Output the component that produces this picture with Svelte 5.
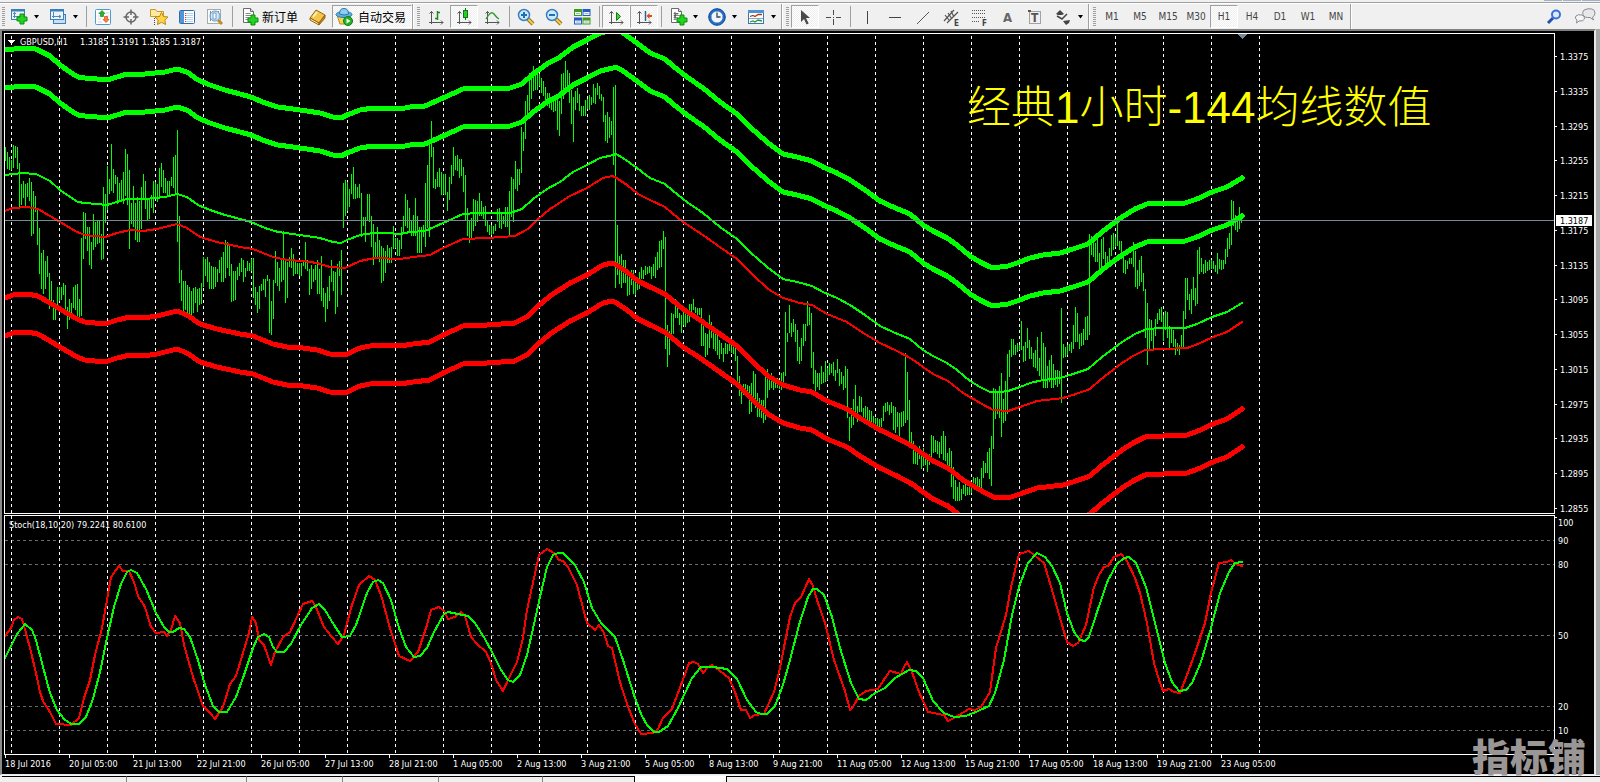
<script>
  const priceLevels = Array.from({ length: 14 }, (_, i) => ({
    label: (1.3375 - i * 0.004).toFixed(4),
    y: Math.round(56 + (i * 452) / 13),
  }));
  const stochLevels = [[90, 540], [80, 564], [50, 635], [20, 706], [10, 730]];
  const gridX = Array.from({ length: 27 }, (_, i) => 11 + i * 48);
  const times = [
    '18 Jul 2016', '20 Jul 05:00', '21 Jul 13:00', '22 Jul 21:00', '26 Jul 05:00', '27 Jul 13:00', '28 Jul 21:00',
    '1 Aug 05:00', '2 Aug 13:00', '3 Aug 21:00', '5 Aug 05:00', '8 Aug 13:00', '9 Aug 21:00', '11 Aug 05:00',
    '12 Aug 13:00', '15 Aug 21:00', '17 Aug 05:00', '18 Aug 13:00', '19 Aug 21:00', '23 Aug 05:00',
  ];

  // High-low ranges, one bar every two units, keyed by the first bar's x.
  const runs = [
    [5, '147-160 152-168 157-169 160-169 145-167 146-157 147-168 163-207 184-204 181-197 184-206 183-196 178-200 182-235 191-233 196-211 209-244 228-273 253-288 250-293 261-288 256-276 273-308 281-302 300-319 303-319 287-305 287-300 287-299 283-294 285-312 307-328 299-319 303-313 287-307 285-309 284-317 299-316'],
    [81, '238-315 212-258 213-238 227-250 227-264 242-268 214-249 222-246 220-243 220-242 234-259 187-258 194-222 166-209 179-193 144-190 169-192 175-183 177-203 183-199 180-199 172-203 149-195 154-204 170-248 203-223 186-226 203-239 197-241 201-241 187-228 174-199 181-208 200-220 200-218 195-207 181-212 182-196 184-201 168-196'],
    [161, '163-186 170-192 178-192 181-195 181-194 177-185 157-187 155-192 130-241 216-282 270-300 281-310 281-309 285-313 287-315 291-315 288-312 287-302 289-311 288-304 283-303 257-286 259-275 257-281 262-288 266-288 267-288 267-286 269-281 260-272 257-281 252-281 240-277 242-267 246-275 264-301 271-300 271-299 267-279 263-275'],
    [241, '258-271 260-281 268-276 261-270 263-270 259-270 258-297 287-304 292-312 286-308 284-290 279-289 279-296 275-280 279-332 301-334 280-318 251-282 262-285 268-290 260-281 231-279 259-302 262-297 257-266 248-267 254-275 262-273 263-273 263-275 263-275 260-265 242-268 260-270 269-294 265-288 269-281 265-279 260-293 269-293'],
    [321, '256-300 288-306 293-321 287-308 276-300 260-281 271-290 272-313 264-306 261-275 250-294 183-227 180-215 182-210 189-206 174-193 167-198 184-198 187-197 184-197 193-236 217-225 217-241 194-219 194-221 216-246 224-264 242-257 227-256 240-261 246-282 248-280 251-272 245-262 248-262 247-262 226-248 238-247 238-255 240-255'],
    [401, '227-248 216-231 194-225 200-227 208-230 220-235 215-235 198-235 216-252 227-252 227-252 225-236 183-246 165-227 144-236 121-156 147-187 179-188 172-186 168-186 172-194 174-193 174-194 192-210 177-199 165-183 147-175 156-169 155-170 159-177 159-175 167-191 175-220 208-235 221-242 218-238 199-230 200-225 201-221 193-215'],
    [481, '201-215 207-218 206-225 220-231 225-234 225-234 226-233 224-230 209-221 208-227 214-228 216-223 207-226 207-226 191-235 177-216 179-221 161-188 169-190 169-184 127-172 132-150 101-138 95-115 73-110 77-98 66-90 71-89 73-89 74-85 78-92 81-95 87-105 93-105 93-107 97-109 97-111 95-110 98-129 101-135'],
    [561, '74-113 73-98 61-90 70-88 73-102 90-123 97-141 91-109 88-102 94-110 106-115 106-115 100-115 99-108 95-109 97-104 84-102 88-103 83-94 86-98 94-100 97-121 115-140 112-142 117-137 121-134 87-164 85-287 225-274 256-283 254-287 260-282 260-282 272-295 275-294 270-284 270-293 280-294 279-289 272-288'],
    [641, '267-278 270-278 266-274 267-273 266-272 267-278 264-275 257-277 252-269 241-267 240-266 231-248 237-348 325-366 331-354 313-337 314-333 299-317 308-317 313-324 315-332 311-324 313-326 313-322 304-321 304-313 299-309 307-312 308-314 308-314 308-345 324-345 333-356 334-354 315-347 322-337 331-348 332-350 335-354 340-358'],
    [721, '343-353 348-361 343-353 344-353 340-350 344-352 347-353 347-360 356-386 376-395 388-403 384-394 384-395 385-395 386-413 383-411 371-397 374-407 393-416 398-416 400-417 400-422 377-419 369-397 380-389 373-387 377-389 378-387 378-387 380-388 373-389 372-381 312-375 333-341 305-332 323-336 319-331 324-341 330-360 347-363'],
    [801, '338-360 324-345 324-340 301-325 307-324 313-367 352-383 370-392 373-386 373-389 366-383 372-382 361-381 368-379 363-374 364-372 362-375 370-380 359-372 369-385 372-383 376-389 366-387 369-417 417-440 408-427 399-424 385-413 406-421 396-411 397-411 408-418 406-420 407-420 410-422 411-422 416-426 418-428 418-429 419-428'],
    [881, '418-426 406-420 403-411 402-410 405-414 402-412 406-429 407-432 412-426 413-437 412-426 411-425 353-422 372-419 400-443 432-445 441-463 452-463 451-464 446-458 452-468 448-465 457-464 458-471 454-464 435-457 436-452 440-451 441-453 442-457 436-453 431-459 436-460 453-466 448-466 451-486 467-498 480-500 487-500 482-500'],
    [961, '489-499 485-493 483-495 487-494 487-494 484-492 477-486 478-487 477-486 479-488 468-489 461-477 463-472 452-472 448-478 436-485 388-448 389-418 392-413 386-417 373-436 399-422 381-420 354-413 350-376 339-356 339-354 345-354 343-351 345-349 321-349 346-361 342-360 328-347 340-358 347-358 353-366 350-367 337-370 358-375'],
    [1041, '332-380 343-387 347-387 366-387 360-381 355-387 364-387 370-384 370-386 371-383 308-402 344-357 347-356 345-354 344-350 342-352 325-348 307-341 313-341 334-348 333-345 329-344 317-339 316-339 234-334 236-254 237-256 243-261 239-261 253-269 239-270 237-258 252-268 256-264 248-263 235-255 233-249 237-246 222-245 241-249'],
    [1121, '241-258 254-272 260-273 261-268 258-263 258-263 242-266 251-286 270-288 260-285 256-281 273-290 289-337 303-364 319-349 320-340 329-348 319-335 313-323 309-319 307-321 315-340 311-329 312-337 326-347 328-342 330-346 339-354 343-350 345-354 335-346 311-347 278-318 278-299 294-309 289-313 277-299 288-305 250-303 247-273'],
    [1201, '258-271 264-273 260-272 262-270 260-269 260-268 261-268 265-271 253-273 259-268 260-269 260-268 249-263 238-256 233-248 200-244 201-225 215-229 217-231 207-228 216-222'],
  ];
  const bars = runs
    .map(([x0, list]) =>
      list.split(' ').map((r, i) => {
        const [hi, lo] = r.split('-').map(Number);
        return `M${x0 + i * 2 + 0.5} ${hi}V${lo + 1}`;
      }).join(''))
    .join('');

  const maHigh = '5,175 14,174 22,173 36,174 50,181 60,190 70,197 78,202 85,203 97,204 107,205 117,202 127,199 145,199 165,197 177,194 187,197 198,205 210,210 225,215 240,219 251,222 265,228 278,232 300,235 320,238 333,242 341,243 347,240 360,235 373,233 385,233 400,234 410,232 425,231 443,223 463,214 478,213 510,213 522,209 533,199 547,189 560,182 573,172 587,165 600,158 613,155 616,154 623,158 637,168 650,178 665,184 673,191 687,202 703,213 720,227 737,239 750,252 767,267 783,279 797,282 812,286 823,292 837,298 850,305 865,315 880,326 893,332 910,339 923,350 933,356 947,363 957,370 970,381 980,387 990,392 1000,392 1008,391 1020,387 1030,383 1043,380 1060,378 1073,374 1088,369 1102,357 1122,342 1135,334 1147,329 1162,328 1185,328 1197,324 1212,317 1227,312 1242,303';
  const maLow = '5,211 13,208 27,207 38,209 50,216 60,222 77,232 85,235 105,237 117,233 130,230 143,231 157,229 177,224 187,228 200,237 217,242 240,247 253,249 273,257 287,260 303,261 317,263 330,267 345,268 360,261 375,258 400,259 413,257 430,255 443,248 463,239 487,238 515,236 528,229 537,220 550,209 570,196 587,188 603,178 612,176 615,177 627,185 638,194 650,200 665,207 672,213 683,222 700,233 717,245 737,259 753,275 768,289 783,298 800,303 812,305 827,314 847,322 860,331 880,343 897,351 912,359 923,367 933,374 948,381 963,393 982,404 993,410 1008,411 1020,407 1037,401 1063,398 1073,395 1090,389 1100,380 1122,363 1133,356 1145,350 1163,349 1187,348 1198,344 1213,337 1227,332 1242,322';
  const bands = [
    { points: maHigh, dy: 0, w: 2, c: '#00ff00' },
    { points: maLow, dy: 0, w: 2, c: '#ff0000' },
    { points: maHigh, dy: -87, w: 5, c: '#00ff00' },
    { points: maHigh, dy: -125, w: 5, c: '#00ff00' },
    { points: maLow, dy: 87, w: 5, c: '#ff0000' },
    { points: maLow, dy: 125, w: 5, c: '#ff0000' },
  ];

  const stochMain = '5,636 11,628 14,620 18,617 22,619 26,633 30,648 36,673 40,692 43,701 50,712 56,724 71,725 79,718 84,698 90,680 95,655 102,628 107,600 111,577 119,566 123,571 129,571 134,582 138,596 145,607 151,627 156,633 164,632 167,636 171,630 175,616 180,623 184,645 193,677 203,706 211,714 215,719 223,707 230,684 236,676 243,653 249,633 252,617 256,623 259,640 264,645 271,665 275,652 283,637 290,632 303,604 312,601 315,605 324,627 332,637 338,644 344,635 351,608 359,585 369,576 375,580 382,598 389,625 399,656 410,661 418,652 427,625 431,610 439,607 444,611 448,619 455,617 461,612 465,616 471,637 477,644 486,652 491,663 496,680 503,691 509,678 517,662 523,638 527,610 534,578 539,555 547,549 554,553 559,560 563,561 568,567 577,585 584,612 587,623 595,630 599,625 604,633 608,646 612,648 620,682 628,707 635,724 641,734 653,733 658,729 663,718 672,709 684,677 689,663 694,662 698,664 703,673 708,667 712,665 720,671 729,678 735,692 741,710 746,710 750,718 755,715 764,714 774,692 780,668 785,642 790,617 795,603 801,597 809,579 813,586 817,600 825,623 834,660 845,691 850,710 853,707 859,696 866,691 878,689 885,678 890,671 901,674 904,667 907,662 912,672 919,692 928,712 944,715 948,721 956,717 964,712 969,709 975,710 981,707 990,692 996,648 1006,615 1011,587 1019,554 1029,551 1034,555 1044,563 1052,590 1060,618 1067,642 1073,646 1078,643 1086,625 1094,587 1099,575 1104,567 1108,566 1114,557 1121,554 1127,561 1135,578 1140,593 1147,623 1154,663 1159,680 1163,691 1169,689 1174,692 1180,693 1187,675 1195,653 1205,623 1211,593 1219,563 1227,562 1231,560 1236,564 1242,566';
  const stochSignal = '5,658 17,634 25,624 32,630 36,640 43,667 50,693 57,710 64,719 71,724 79,724 86,717 93,699 100,672 107,638 114,607 121,584 127,572 131,570 137,573 146,589 156,613 164,627 169,632 173,632 179,628 184,629 190,637 198,660 205,685 213,706 219,712 227,712 236,697 244,675 253,648 258,637 264,634 269,637 273,647 277,652 284,652 291,644 301,625 312,608 319,604 325,610 334,625 342,637 350,636 356,625 367,593 373,582 378,580 383,583 391,600 399,628 406,647 414,657 420,656 427,648 434,632 444,614 448,612 458,614 468,616 475,623 485,639 492,652 501,670 508,680 513,682 520,675 527,655 532,633 540,597 547,567 553,555 558,553 563,553 575,565 584,582 592,608 601,623 615,637 623,660 634,695 641,714 647,725 654,732 659,732 668,726 678,708 692,678 701,667 713,667 727,669 737,679 747,700 756,712 761,714 767,714 775,706 783,685 790,660 799,625 808,597 813,589 817,589 824,595 832,617 840,648 851,683 859,699 866,700 875,693 885,688 895,678 909,670 916,671 923,678 933,701 944,713 954,717 966,716 978,711 989,706 995,693 1004,660 1012,615 1019,587 1028,563 1037,553 1045,557 1052,566 1060,583 1067,613 1074,632 1080,640 1085,641 1089,637 1097,612 1108,580 1117,564 1124,558 1129,557 1136,563 1146,587 1156,627 1165,663 1172,682 1179,691 1186,690 1192,683 1201,662 1211,628 1220,593 1229,572 1235,563 1242,562';

  const plus = (x, y) => `<path transform="translate(${x} ${y})" d="M-2-5h4v3h3v4h-3v3h-4v-3h-3v-4h3z" fill="#22d41e" stroke="#0b8a10"/>`;
  const axes = '<path d="M5.500 4.500V17M3 15.500H17M3.500 6.500l2-2 2 2M15 13.500l2 2-2 2" stroke="#555" fill="none"/>';
  const sheet = '<path d="M3.500 1.500h7l3 3v11h-10z" fill="#fff" stroke="#6b6b6b"/><path d="M10.500 1.500v3h3" fill="#ddd" stroke="#6b6b6b"/><path d="M5.500 6.500h5M5.500 8.500h6M5.500 10.500h4M5.500 12.500h3" stroke="#888"/>';
  const lens = (sign) => `<path d="M12 12l5 5" stroke="#9a7415" stroke-width="4"/><path d="M12 12l5 5" stroke="#f3cf53" stroke-width="2"/><circle cx="8" cy="8" r="5.500" fill="#cdeafb" stroke="#3a7fc0" stroke-width="1.500"/><path d="${sign}" stroke="#1d6fb8" stroke-width="2"/>`;
  const icons = {
    newchart: `<rect x="2.500" y="2.500" width="13" height="10" fill="#eaf4fc" stroke="#3f7fb8"/><path d="M2 3.500h14" stroke="#3f7fb8" stroke-width="2"/><path d="M5.500 5v6M4 9.500h9M4 6.500h3" stroke="#5a86ad"/>${plus(13, 12)}`,
    profiles: '<rect x="5.500" y="7.500" width="12" height="9" fill="#c9def2" stroke="#3f7fb8"/><rect x="2.500" y="2.500" width="13" height="10" fill="#eaf4fc" stroke="#3f7fb8"/><path d="M2 3.500h14" stroke="#3f7fb8" stroke-width="2"/><path d="M5.500 5v6M4 9.500h9M11 8l2 1.500-2 1.500" stroke="#5a86ad" fill="none"/>',
    market: '<rect x="2.500" y="2.500" width="15" height="15" rx="1" fill="#fff" stroke="#4a9bd0"/><path d="M5 6h3M5 9h2M5 12h3M5 15h4M13 6h3M13 9h3" stroke="#c9d6df"/><path d="M9 3.500l3 3h-1.500v3h-3v-3H6z" fill="#27b527" stroke="#0b7a18" stroke-width=".6"/><path d="M13 15.500l-3-3h1.500v-3h3v3H16z" fill="#ff7d3b" stroke="#c43d08" stroke-width=".6"/>',
    target: '<circle cx="10" cy="10" r="5" fill="none" stroke="#666" stroke-width="1.500"/><path d="M10 2.500v5.500M10 12v5.500M2.500 10H8M12 10h5.500" stroke="#666" stroke-width="1.500"/>',
    favorites: '<path d="M1.500 9.500v-7h5l1.500 2h6.500v5z" fill="#ffe9a0" stroke="#c39a2e"/><path d="M5.500 11v7" stroke="#444" stroke-dasharray="1 1"/><path d="M12.500 5.500l2 4 4.500.5-3.200 3 .8 4.500-4.100-2.200-4 2.200.7-4.500L6 10l4.500-.5z" fill="#ffd447" stroke="#b98912"/>',
    navigator: '<rect x="2.500" y="3.500" width="15" height="13" rx="1" fill="#fff" stroke="#2c6da8"/><path d="M3 4h4v12H3z" fill="#4f97d7"/><path d="M9 6.500h7M9 8.500h7M9 10.500h7M9 12.500h7M9 14.500h7" stroke="#b7d3ea"/><path d="M8 6.500h1M8 8.500h1M8 10.500h1M8 12.500h1M8 14.500h1" stroke="#d04040"/>',
    tester: '<rect x="2.500" y="2.500" width="13" height="14" fill="#fafafa" stroke="#aaa"/><path d="M5.500 4v10M13.500 4v10" stroke="#888"/><path d="M13 13l4 4" stroke="#c08d22" stroke-width="3"/><circle cx="10" cy="9" r="5" fill="#cfe7fa" fill-opacity=".85" stroke="#5b9bcf"/><rect x="8" y="6" width="3" height="6" fill="#fff" stroke="#6a9cc4"/>',
    order: `${sheet}${plus(13, 13)}`,
    gold: '<path d="M2 11l6-8 9 5-6 8z" fill="#f3c64b" stroke="#96650b"/><path d="M2 11l9 5v2l-9-5z" fill="#fff0b5" stroke="#96650b"/><path d="M11 16l6-8v3l-6 7z" fill="#c98c16" stroke="#96650b"/><path d="M5 10l4-5" stroke="#fff2b8" stroke-width="2"/>',
    auto: '<path d="M3 8l3 9h6l5-9z" fill="#f6d45c" stroke="#b28f1d"/><ellipse cx="10" cy="7.500" rx="8" ry="3" fill="#5fb2e0" stroke="#2878ab"/><path d="M5.500 7q0-5.500 4.500-5.500t4.500 5.500q-4 2-9 0z" fill="#8dcdf0" stroke="#2878ab"/><circle cx="14" cy="14" r="4.500" fill="#22b322" stroke="#0c7d15"/><path d="M12.500 11.500v5l4-2.500z" fill="#fff"/>',
    bars: `${axes}<path d="M11.500 4v9M9 11.500h2.500M11.500 5.500H14" stroke="#1e8a1e" stroke-width="1.500"/>`,
    candles: `${axes}<path d="M11.500 1v12" stroke="#0a7a14"/><rect x="9.500" y="3.500" width="4" height="7" fill="#1fd31f" stroke="#0a7a14"/>`,
    line: `${axes}<path d="M4 12Q9 3 12 7t5 5" stroke="#2b9b2b" fill="none" stroke-width="1.300"/>`,
    zoomin: lens('M5 8h6M8 5v6'),
    zoomout: lens('M5 8h6'),
    tile: '<path d="M2 2h8v7H2zM10.500 10.500h8v7h-8z" fill="#3f9a1f"/><path d="M10.500 2h8v7h-8zM2 10.500h8v7H2z" fill="#2559c8"/><path d="M3 5h6v3H3zM11.500 5h6v3h-6zM3 13.500h6v3H3zM11.500 13.500h6v3h-6z" fill="#edf6e8"/><path d="M4 6.500h4M12.500 6.500h4M4 15h4M12.500 15h4" stroke="#9bb7d2"/>',
    scroll: `${axes}<path d="M10.500 5.500v8l4-4z" fill="#3fd13f" stroke="#0d7f17"/>`,
    shift: `${axes}<path d="M11.500 4v10" stroke="#1f66a0" stroke-width="1.500"/><path d="M12.500 9l3-3v2h2.500v2h-2.500v2z" fill="#e04a12"/>`,
    indicators: `${sheet}<path d="M7 5v7M10 7q-3-1-3 3" stroke="#555" fill="none"/>${plus(14, 13)}`,
    clock: '<circle cx="10" cy="10" r="7" fill="#eef7ff" stroke="#1d6fd0" stroke-width="2.500"/><circle cx="10" cy="10" r="8.300" fill="none" stroke="#0f3f8c"/><path d="M10 5.500V10h3.500" stroke="#444" stroke-width="1.300" fill="none"/><path d="M10 3.500v1M10 15.500v1M3.500 10h1M15.500 10h1" stroke="#555"/>',
    template: '<rect x="2.500" y="3.500" width="15" height="13" fill="#fff" stroke="#3878b5"/><path d="M2 4.500h16" stroke="#4d93d3" stroke-width="3"/><path d="M4 9.500l3-1 2 1 3-2h4" stroke="#a33b1c" stroke-width="1.300" fill="none"/><path d="M3 11.500h14" stroke="#7ea7cc"/><path d="M4 15l3-1 2 1 3-2 4 1" stroke="#2d9434" stroke-width="1.300" fill="none"/>',
    cursor: '<path d="M6 3v12l3-3 2.500 5.500 2.200-1L11 11h4z" fill="#4a4a4a"/>',
    cross: '<path d="M10.500 3v5M10.500 12v6M3 10.500h5M13 10.500h5M10 10.500h1" stroke="#4a4a4a"/>',
    vline: '<path d="M10.500 4v13" stroke="#444"/>',
    hline: '<path d="M4 10.500h12" stroke="#444"/>',
    trend: '<path d="M4 17L16 5" stroke="#555"/>',
    channel: '<path d="M3 14L13 3M6 16L17 5M4 8l4 5M7 6l4 6M10 4l3 6" stroke="#555" stroke-width="1.200"/><text x="13" y="19" font-size="8" font-weight="700" fill="#444">E</text>',
    fibo: '<path d="M3 3.500h14M3 6.500h14M3 10.500h14M3 14.500h8" stroke="#555" stroke-dasharray="1 1"/><text x="13" y="19" font-size="8" font-weight="700" fill="#444">F</text>',
    text: '<text x="6" y="15" font-size="13" font-weight="700" fill="#666">A</text>',
    label: '<rect x="4.500" y="4.500" width="11" height="12" fill="none" stroke="#555" stroke-dasharray="1 1"/><path d="M3 3h3v2H3z" fill="#555"/><text x="6" y="15" font-size="12" font-weight="700" fill="#555">T</text>',
    arrows: '<path d="M3 7l4-4 4 4-2 1H5zM10 14l7-1-1 3-3 2z" fill="#444"/><path d="M4 9l5 3 3-3M9 12l5-5" stroke="#444" stroke-width="1.500" fill="none"/>',
    search: '<path d="M8 11l-5 5" stroke="#2450b4" stroke-width="3"/><circle cx="11" cy="7.500" r="4" fill="#dcebff" stroke="#3a6fd8" stroke-width="2"/>',
    chat: '<path d="M9 3q4-2 8-1 3 1 3 4t-2.500 4l1 3-3.500-2.500q-6 .5-7-3Q7 5 9 3z" fill="#e8e8ec" stroke="#8b8b93"/><path d="M1 9q2-2 6-1 3 1 2.500 4-1 2.500-5.500 2l-2.500 2 .5-3Q-1 11 1 9z" fill="#f5f5f7" stroke="#8b8b93"/>',
  };

  const left = [
    { icon: 'newchart', name: 'New chart', menu: true }, { icon: 'profiles', name: 'Profiles', menu: true }, { sep: true },
    { icon: 'market', name: 'Market watch' }, { icon: 'target', name: 'Data window' }, { icon: 'favorites', name: 'Navigator' },
    { icon: 'navigator', name: 'Terminal' }, { icon: 'tester', name: 'Strategy tester' }, { sep: true },
    { icon: 'order', text: '新订单', cls: 'order' }, { icon: 'gold', name: 'MetaEditor' }, { icon: 'auto', text: '自动交易', cls: 'auto', on: true },
  ];
  const charts = [
    { icon: 'bars', name: 'Bar chart' }, { icon: 'candles', name: 'Candlesticks', on: true }, { icon: 'line', name: 'Line chart' }, { sep: true },
    { icon: 'zoomin', name: 'Zoom in' }, { icon: 'zoomout', name: 'Zoom out' }, { icon: 'tile', name: 'Tile windows' }, { sep: true },
    { icon: 'scroll', name: 'Auto scroll', on: true }, { icon: 'shift', name: 'Chart shift', on: true }, { sep: true },
    { icon: 'indicators', name: 'Indicators', menu: true }, { icon: 'clock', name: 'Periods', menu: true }, { icon: 'template', name: 'Templates', menu: true },
  ];
  const drawing = [
    { icon: 'cursor', name: 'Cursor', on: true }, { icon: 'cross', name: 'Crosshair' }, { sep: true },
    { icon: 'vline', name: 'Vertical line' }, { icon: 'hline', name: 'Horizontal line' }, { icon: 'trend', name: 'Trendline' },
    { icon: 'channel', name: 'Equidistant channel' }, { icon: 'fibo', name: 'Fibonacci' }, { icon: 'text', name: 'Text' },
    { icon: 'label', name: 'Text label' }, { icon: 'arrows', name: 'Arrows', menu: true },
  ];
  let period = $state('H1');
  const periods = ['M1', 'M5', 'M15', 'M30', 'H1', 'H4', 'D1', 'W1', 'MN'].map((p) => ({ text: p, period: p }));
  const groups = [left, charts, drawing, periods];
  const tabs = [125, 120, 96, 96, 104, 92];
</script>

{#snippet glyph(name)}
  <svg class="icon" viewBox="0 0 20 20" aria-hidden="true">{@html icons[name]}</svg>
{/snippet}

<div class="app">
  <div class="titlebar"><i></i><i></i><i></i></div>

  <div class="toolbar">
    {#each groups as group}
      <div class="group" role="toolbar">
        <span class="grip"></span>
        {#each group as item}
          {#if item.sep}
            <span class="sep"></span>
          {:else if item.period}
            <button class="tb period" class:on={period === item.period} onclick={() => (period = item.period)}>{item.text}</button>
          {:else}
            <button class="tb {item.cls ?? ''}" class:on={item.on} aria-label={item.text ?? item.name}>
              {@render glyph(item.icon)}{#if item.text}<span>{item.text}</span>{/if}
            </button>
            {#if item.menu}
              <button class="drop" aria-label="{item.name} menu"><svg width="7" height="4" viewBox="0 0 7 4"><path d="M1 0h5L3.500 3.500z" /></svg></button>
            {/if}
          {/if}
        {/each}
      </div>
    {/each}
    <div class="tools">
      <button class="tb" aria-label="Search">{@render glyph('search')}</button>
      <button class="tb" aria-label="Chat">{@render glyph('chat')}</button>
    </div>
  </div>

  <main class="window">
    <section class="panes">
      <div class="plot main">
        <svg class="canvas">
          <g transform="translate(-5 -34)">
            {#each gridX as x}<path class="grid" d="M{x + 0.5} 36V514" />{/each}
            <path class="bars" d={bars} />
            {#each bands as b}
              <polyline points={b.points} transform="translate(0 {b.dy})" stroke={b.c} stroke-width={b.w} />
            {/each}
            <line class="price" x1="5" x2="100%" y1="220.500" y2="220.500" />
            <line class="price" x1="1200" x2="1700" y1="220.500" y2="220.500" />
            <path d="M1237 34h11l-5.500 5z" fill="#778899" />
            <path d="M8 40h7l-3.500 4z" fill="#fff" />
            <text x="20" y="45">GBPUSD,H1</text>
            <text x="80" y="45">1.3185 1.3191 1.3185 1.3187</text>
            <text class="note" x="967" y="123">经典1小时-144均线数值</text>
          </g>
        </svg>
      </div>
      <svg class="axis">
        <g transform="translate(-1555 -33)">
          {#each priceLevels as p}
            <path class="tick" d="M1555 {p.y + 0.5}h2" />
            <text x="1560" y={p.y + 4}>{p.label}</text>
          {/each}
          <rect x="1556" y="215" width="36" height="11" fill="#fff" />
          <text class="now" x="1560" y="224">1.3187</text>
        </g>
      </svg>

      <div class="plot sub">
        <svg class="canvas">
          <g transform="translate(-5 -516)">
            {#each stochLevels as [, y]}<path class="level" d="M5 {y + 0.5}H4000" />{/each}
            {#each gridX as x}<path class="grid" d="M{x + 0.5} 516V754" />{/each}
            <polyline points={stochMain} stroke="#ff0000" stroke-width="2" />
            <polyline points={stochSignal} stroke="#00ff00" stroke-width="2" />
            <text x="9" y="528">Stoch(18,10,20) 79.2241 80.6100</text>
          </g>
        </svg>
      </div>
      <svg class="axis">
        <g transform="translate(-1555 -515)">
          <path class="tick" d="M1555 517.500h2" />
          <text x="1558" y="526">100</text>
          {#each stochLevels as [v, y]}<text x="1558" y={y + 4}>{v}</text>{/each}
          <text x="1558" y="751">0</text>
        </g>
      </svg>

      <ul class="times">
        {#each times as t}<li>{t}</li>{/each}
      </ul>
    </section>
    <div class="watermark">指标铺</div>
  </main>

  <footer class="tabs">
    {#each tabs as w, i}<span style="width: {w}px" class:last={i === tabs.length - 1}></span>{/each}
    <span class="active"></span>
    <span class="rest"></span>
  </footer>
</div>

<style>
  :global(body) { margin: 0; background: #f0f0f0; }
  .app {
    min-height: 100vh;
    display: flex;
    flex-direction: column;
    overflow: hidden;
    background: #f0f0f0;
    font-family: "DejaVu Sans Condensed", "DejaVu Sans", "Noto Sans CJK SC", sans-serif;
  }
  .titlebar { height: 2px; display: flex; justify-content: flex-end; gap: 1px; border-bottom: 1px solid #a0a0a0; }
  .titlebar i { width: 18px; height: 1px; background: #a3b2c6; }

  .toolbar { display: flex; height: 26px; border-top: 1px solid #fff; box-sizing: border-box; }
  .group { display: flex; align-items: center; border-right: 1px solid #a0a0a0; box-shadow: 1px 0 #fff; margin-right: 1px; }
  .group:first-child .grip { margin: 0 0 0 2px; }
  .grip { width: 3px; height: 20px; margin: 0 2px 0 3px; background: repeating-linear-gradient(#a0a0a0 0 1px, #f0f0f0 1px 2px); }
  .sep { width: 1px; height: 21px; margin: 0 2px 0 3px; background: #a0a0a0; }
  button { font: inherit; padding: 0; margin: 0; border: 0; background: none; color: #000; }
  .tb {
    width: 28px;
    height: 23px;
    display: flex;
    align-items: center;
    justify-content: center;
    border: 1px solid transparent;
    box-sizing: border-box;
    background-clip: padding-box;
  }
  .tb.on {
    border-color: #a0a0a0 #fff #fff #a0a0a0;
    background: repeating-conic-gradient(#fff 0 25%, #eee 0 50%) 0 0 / 2px 2px;
  }
  .tb span { font: 12px/20px "Noto Sans CJK SC", sans-serif; white-space: nowrap; }
  .order { width: 69px; padding: 0 4px; justify-content: flex-start; }
  .order span { margin-left: 2px; }
  .auto { width: 80px; padding: 0 1px; justify-content: flex-start; }
  .auto span { margin-left: 4px; }
  .period { font-size: 10px; color: #444; }
  .icon { width: 20px; height: 20px; flex: none; overflow: visible; font-family: "DejaVu Sans Condensed", sans-serif; }
  .drop { width: 11px; height: 23px; display: flex; align-items: center; }
  .tools { display: flex; align-items: center; margin-left: auto; }
  .tools .tb { width: 30px; }

  .window {
    position: relative;
    border: solid;
    border-width: 2px 2px 1px 2px;
    border-color: #808080 #e8e8e8 #e8e8e8 #8a8a8a;
    margin-right: 4px;
    box-shadow: 4px 0 #a8a8a8;
    background: #000;
    padding: 2px 0 0 2px;
  }
  .panes { display: grid; grid-template-columns: 1fr 39px; row-gap: 1px; }
  .plot { border: 1px solid #fff; min-width: 0; }
  .canvas, .axis { display: block; width: 100%; }
  .main .canvas { height: 479px; }
  .main + .axis { height: 481px; }
  .sub .canvas { height: 238px; }
  .sub + .axis { height: 240px; }
  .canvas, .axis { font-size: 9px; fill: none; shape-rendering: crispEdges; }
  text { fill: #fff; white-space: pre; }
  .note { font: 300 44px "Liberation Sans", "Noto Sans CJK SC", sans-serif; fill: #ff0; }
  .now { fill: #000; }
  .grid { stroke: #fff; stroke-dasharray: 3 3; }
  .level { stroke: #696969; stroke-dasharray: 3 3; }
  .bars { stroke: #00ff00; }
  .price { stroke: #778899; }
  .tick { stroke: #fff; }
  polyline { stroke-linejoin: round; stroke-linecap: round; }
  .times {
    grid-column: 1 / -1;
    display: flex;
    height: 19px;
    margin: -1px 0 0 1px;
    padding: 0;
    list-style: none;
    overflow: hidden;
    color: #fff;
    font-size: 9px;
    line-height: 12px;
  }
  .times li { flex: 0 0 64px; white-space: nowrap; border-top: 0; }
  .times li::before { content: ""; display: block; width: 1px; height: 3px; background: #fff; }
  .watermark {
    position: absolute;
    right: 8px;
    bottom: 0;
    color: #9b9696;
    font: 900 38px/38px "Noto Sans CJK SC", sans-serif;
  }

  .tabs { flex: 1; display: flex; min-height: 4px; border-top: 1px solid #f4f4f4; padding-left: 2px; }
  .tabs span { box-sizing: border-box; flex: none; border-top: 1px solid #000; border-right: 1px solid #808080; }
  .tabs .last { border-right-color: #000; }
  .tabs .active { width: 91px; border: 0; background: #fff; }
  .tabs .rest { flex: 1; border-left: 1px solid #000; border-right: 0; }
</style>
